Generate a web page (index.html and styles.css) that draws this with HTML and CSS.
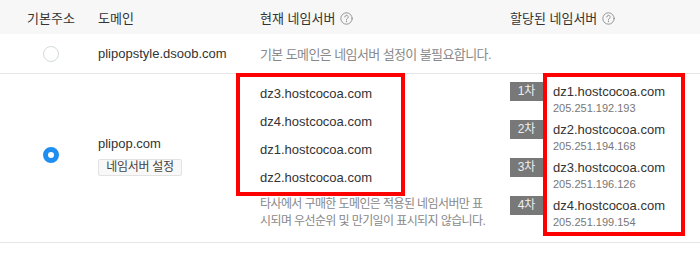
FILE: index.html
```html
<!DOCTYPE html>
<html lang="ko">
<head>
    <meta charset="UTF-8">
    <title>네임서버 관리</title>
    <link rel="stylesheet" href="styles.css">
</head>
<body>
    <div class="ns-table">
        <div class="ns-row ns-head">
            <div class="cell c-default">기본주소</div>
            <div class="cell c-domain">도메인</div>
            <div class="cell c-current">현재 네임서버
                <svg class="help" viewBox="0 0 16 16"><circle cx="8" cy="8" r="7"/><path d="M5.9 6.2a2.1 2.1 0 1 1 3 1.9c-.6.3-.9.7-.9 1.3v.6"/><circle class="dot" cx="8" cy="11.8" r=".8"/></svg>
            </div>
            <div class="cell c-assigned">할당된 네임서버
                <svg class="help" viewBox="0 0 16 16"><circle cx="8" cy="8" r="7"/><path d="M5.9 6.2a2.1 2.1 0 1 1 3 1.9c-.6.3-.9.7-.9 1.3v.6"/><circle class="dot" cx="8" cy="11.8" r=".8"/></svg>
            </div>
        </div>

        <div class="ns-row ns-simple">
            <div class="cell c-default"><span class="radio"></span></div>
            <div class="cell c-domain">plipopstyle.dsoob.com</div>
            <div class="cell c-current muted">기본 도메인은 네임서버 설정이 불필요합니다.</div>
            <div class="cell c-assigned"></div>
        </div>

        <div class="ns-row ns-main">
            <div class="cell c-default"><span class="radio checked"></span></div>
            <div class="cell c-domain">
                <div class="domain-name">plipop.com</div>
                <button class="btn-small">네임서버 설정</button>
            </div>
            <div class="cell c-current">
                <ul class="mark-box current-list">
                    <li>dz3.hostcocoa.com</li>
                    <li>dz4.hostcocoa.com</li>
                    <li>dz1.hostcocoa.com</li>
                    <li>dz2.hostcocoa.com</li>
                </ul>
                <p class="note">타사에서 구매한 도메인은 적용된 네임서버만 표시되며 우선순위 및 만기일이 표시되지 않습니다.</p>
            </div>
            <div class="cell c-assigned">
                <div class="order-col">
                    <span class="order">1차</span>
                    <span class="order">2차</span>
                    <span class="order">3차</span>
                    <span class="order">4차</span>
                </div>
                <ul class="mark-box assigned-list">
                    <li><div class="host">dz1.hostcocoa.com</div><div class="ip">205.251.192.193</div></li>
                    <li><div class="host">dz2.hostcocoa.com</div><div class="ip">205.251.194.168</div></li>
                    <li><div class="host">dz3.hostcocoa.com</div><div class="ip">205.251.196.126</div></li>
                    <li><div class="host">dz4.hostcocoa.com</div><div class="ip">205.251.199.154</div></li>
                </ul>
            </div>
        </div>
    </div>
</body>
</html>
```

FILE: styles.css
```css
body {
    margin: 0;
    background: #fff;
    color: #333;
    font-family: "Liberation Sans", "Noto Sans CJK KR", sans-serif;
    font-size: 13px;
}

.ns-row {
    display: grid;
    grid-template-columns: 90px 150px 262px 1fr;
}

.ns-head {
    height: 34px;
    align-items: center;
    background: #f7f7f7;
}

.ns-simple {
    height: 39px;
    align-items: center;
}

.ns-main {
    border-top: 1px solid #e6e6e6;
    border-bottom: 1px solid #e6e6e6;
    padding-bottom: 6px;
    align-items: start;
}

.c-default {
    padding-left: 12px;
    text-align: center;
}

.c-domain {
    padding-left: 8px;
}

.c-current {
    padding-left: 20px;
}

.c-assigned {
    padding-left: 8px;
}

.ns-main .c-default,
.ns-main .c-domain {
    align-self: center;
}

.help {
    width: 13px;
    height: 13px;
    vertical-align: -2px;
    margin-left: 1px;
    fill: none;
    stroke: #888;
    stroke-width: 1.1;
    stroke-linecap: round;
}

.help .dot {
    fill: #888;
    stroke: none;
}

.radio {
    display: inline-block;
    width: 16px;
    height: 16px;
    box-sizing: border-box;
    border: 1px solid #d3dade;
    border-radius: 50%;
    vertical-align: middle;
    background: #fff;
}

.radio.checked {
    border: 5px solid #1f8ef1;
}

.muted {
    color: #888;
    letter-spacing: -0.6px;
    white-space: nowrap;
}

.domain-name {
    line-height: 18px;
}

.btn-small {
    margin-top: 6px;
    height: 17px;
    width: 84px;
    padding: 0;
    border: 1px solid #e2e2e2;
    border-radius: 2px;
    background: #f8f8f8;
    color: #444;
    font-family: inherit;
    font-size: 12px;
    line-height: 15px;
    letter-spacing: -0.3px;
}

/* red highlight boxes */
.mark-box {
    list-style: none;
    margin: -1px 0 0;
    border: 4px solid #f00;
    box-sizing: border-box;
}

.current-list {
    width: 169px;
    margin-left: -24px;
    padding: 3px 0 0 20px;
}

.current-list li {
    line-height: 28px;
}

.note {
    width: 232px;
    margin: 0;
    font-size: 12px;
    line-height: 17px;
    letter-spacing: -0.6px;
    color: #888;
}

.ns-main .c-assigned {
    display: flex;
    align-items: flex-start;
}

.order-col {
    display: flex;
    flex-direction: column;
    gap: 19px;
    padding-top: 8px;
}

.order {
    width: 33px;
    height: 19px;
    line-height: 19px;
    background: #787878;
    color: #eee;
    font-size: 12px;
    text-align: center;
}

.assigned-list {
    width: 142px;
    padding: 5px 0 2px 6px;
}

.assigned-list li {
    margin-bottom: 4px;
}

.assigned-list li:last-child {
    margin-bottom: 0;
}

.host {
    line-height: 19px;
}

.ip {
    font-size: 11px;
    line-height: 15px;
    color: #777;
}
```
